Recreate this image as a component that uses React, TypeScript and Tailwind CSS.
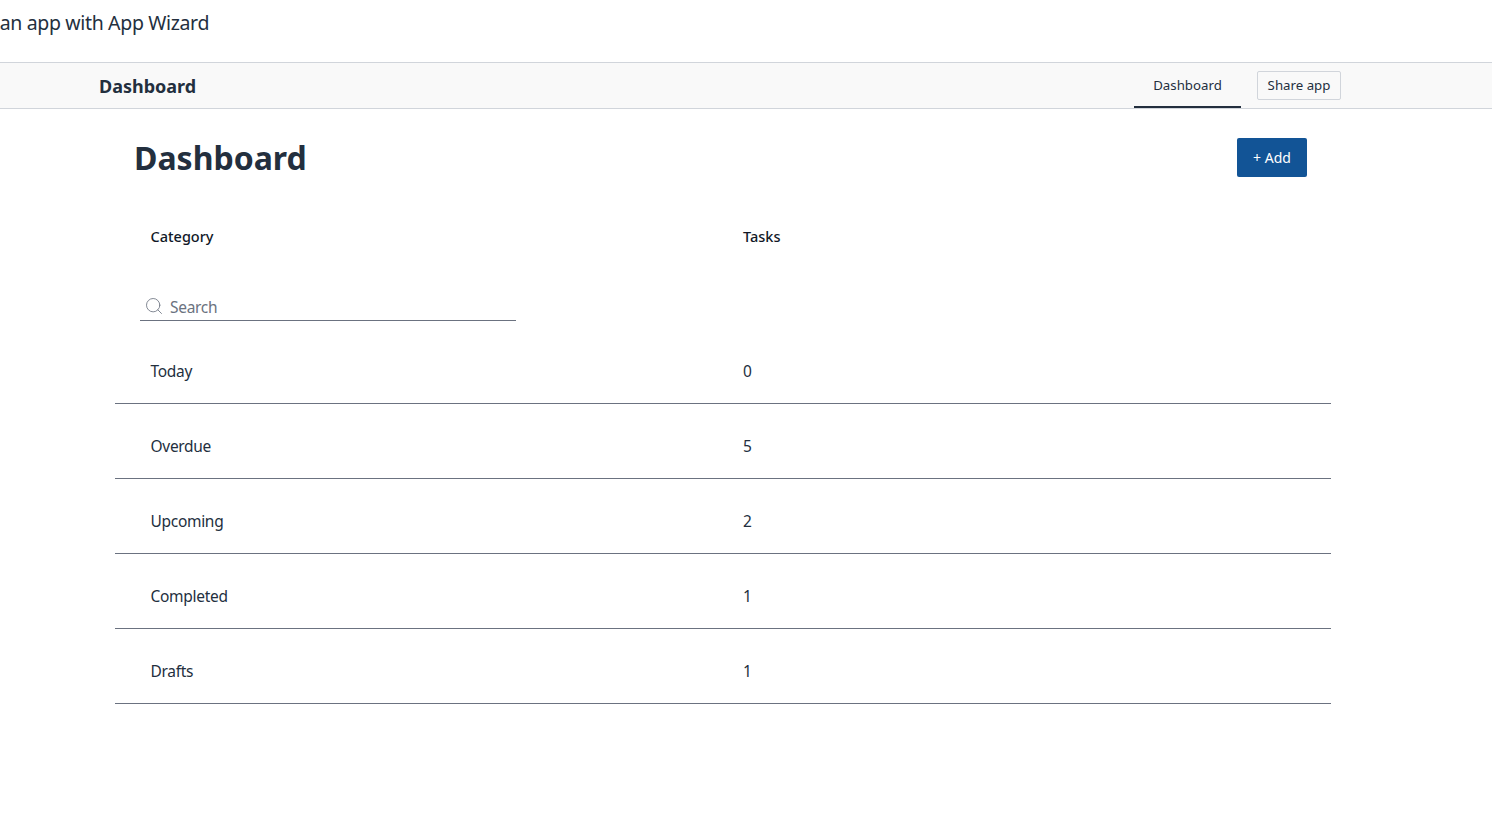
import { Search } from "lucide-react"

const rows = [
  { category: "Today", tasks: 0 },
  { category: "Overdue", tasks: 5 },
  { category: "Upcoming", tasks: 2 },
  { category: "Completed", tasks: 1 },
  { category: "Drafts", tasks: 1 },
]

export default function App() {
  return (
    <div className="min-h-[825px] overflow-hidden bg-white font-['Noto_Sans',sans-serif] text-[#232f3e]">
      {/* cut-off wizard banner */}
      <div className="h-[62px] overflow-hidden pt-[8px]">
        <p className="ml-[-50px] whitespace-nowrap text-[19.5px] leading-[30px] tracking-[-0.35px]">Build an app with App Wizard</p>
      </div>

      <nav className="flex h-[47px] items-stretch border-y border-[#d1d5db] bg-[#f9f9f9] pr-[151px] pl-[99px]">
        <span className="self-center pt-[1px] text-[18px] font-bold">Dashboard</span>
        <div className="ml-auto flex items-stretch">
          <span className="flex w-[107px] items-center justify-center border-b-2 border-[#232f3e] pt-[2px] text-[13.25px]">Dashboard</span>
          <button className="my-auto ml-[16px] h-[29px] w-[84px] rounded-[2px] border border-[#d1d5db] text-[13.25px]">Share app</button>
        </div>
      </nav>

      <main className="ml-[115px] w-[1216px]">
        <header className="flex items-center justify-between pt-[29px] pr-[24px] pl-[19px]">
          <h1 className="text-[32px] leading-[39px] font-bold">Dashboard</h1>
          <button className="h-[39px] w-[70px] rounded-[2px] bg-[#125496] text-[14px] text-white">+ Add</button>
        </header>

        <div className="mt-[40px] grid grid-cols-[592.5px_1fr] pl-[35.5px] text-[14.5px] leading-[38px] font-medium text-[#111827]">
          <span>Category</span>
          <span>Tasks</span>
        </div>

        <div className="mt-[36px] ml-[25px] flex h-[30px] w-[376px] items-center border-b border-[#6b7280] pl-[4px] text-[#6b7280]">
          <Search size={20} strokeWidth={1} className="text-[#6b7280]" />
          <span className="ml-[6px] pt-[4px] text-[15.5px] tracking-[-0.3px]">Search</span>
        </div>

        <div className="mt-[8px]">
          {rows.map((row) => (
            <div key={row.category} className="grid h-[75px] grid-cols-[592.5px_1fr] items-center border-b border-[#6b7280] pt-[11px] pl-[35.5px] text-[15.5px] tracking-[-0.3px]">
              <span>{row.category}</span>
              <span>{row.tasks}</span>
            </div>
          ))}
        </div>
      </main>
    </div>
  )
}
